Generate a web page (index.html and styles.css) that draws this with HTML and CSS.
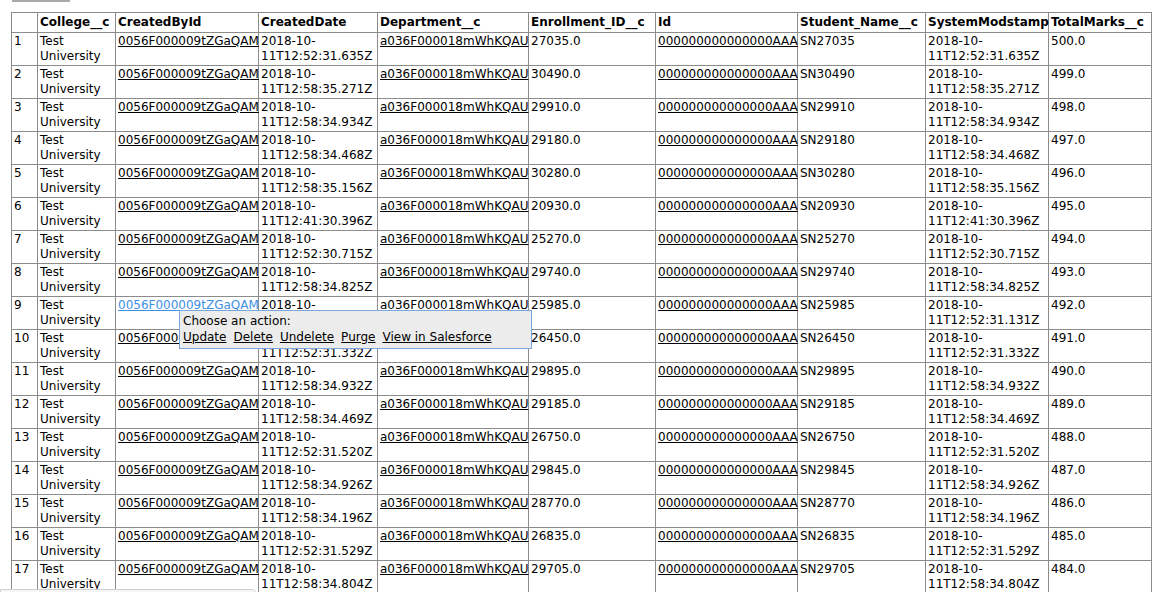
FILE: index.html
```html
<!DOCTYPE html>
<html lang="en">
<head>
  <meta charset="UTF-8" />
  <title>Query Results</title>
  <link rel="stylesheet" href="styles.css">
</head>
<body>
  <div class="page">
    <div class="top-btn"></div>

    <div class="results">
      <table class="grid">
        <colgroup>
          <col class="c-num"><col class="c-college"><col class="c-created"><col class="c-date">
          <col class="c-dept"><col class="c-enroll"><col class="c-id"><col class="c-name">
          <col class="c-mod"><col class="c-marks">
        </colgroup>
        <thead>
          <tr>
            <th></th><th>College__c</th><th>CreatedById</th><th>CreatedDate</th><th>Department__c</th>
            <th>Enrollment_ID__c</th><th>Id</th><th>Student_Name__c</th><th>SystemModstamp</th><th>TotalMarks__c</th>
          </tr>
        </thead>
        <tbody>
          <tr><td>1</td><td>Test University</td><td><a href="#">0056F000009tZGaQAM</a></td><td>2018-10-11T12:52:31.635Z</td><td><a href="#">a036F000018mWhKQAU</a></td><td>27035.0</td><td><a href="#">000000000000000AAA</a></td><td>SN27035</td><td>2018-10-11T12:52:31.635Z</td><td>500.0</td></tr>
          <tr><td>2</td><td>Test University</td><td><a href="#">0056F000009tZGaQAM</a></td><td>2018-10-11T12:58:35.271Z</td><td><a href="#">a036F000018mWhKQAU</a></td><td>30490.0</td><td><a href="#">000000000000000AAA</a></td><td>SN30490</td><td>2018-10-11T12:58:35.271Z</td><td>499.0</td></tr>
          <tr><td>3</td><td>Test University</td><td><a href="#">0056F000009tZGaQAM</a></td><td>2018-10-11T12:58:34.934Z</td><td><a href="#">a036F000018mWhKQAU</a></td><td>29910.0</td><td><a href="#">000000000000000AAA</a></td><td>SN29910</td><td>2018-10-11T12:58:34.934Z</td><td>498.0</td></tr>
          <tr><td>4</td><td>Test University</td><td><a href="#">0056F000009tZGaQAM</a></td><td>2018-10-11T12:58:34.468Z</td><td><a href="#">a036F000018mWhKQAU</a></td><td>29180.0</td><td><a href="#">000000000000000AAA</a></td><td>SN29180</td><td>2018-10-11T12:58:34.468Z</td><td>497.0</td></tr>
          <tr><td>5</td><td>Test University</td><td><a href="#">0056F000009tZGaQAM</a></td><td>2018-10-11T12:58:35.156Z</td><td><a href="#">a036F000018mWhKQAU</a></td><td>30280.0</td><td><a href="#">000000000000000AAA</a></td><td>SN30280</td><td>2018-10-11T12:58:35.156Z</td><td>496.0</td></tr>
          <tr><td>6</td><td>Test University</td><td><a href="#">0056F000009tZGaQAM</a></td><td>2018-10-11T12:41:30.396Z</td><td><a href="#">a036F000018mWhKQAU</a></td><td>20930.0</td><td><a href="#">000000000000000AAA</a></td><td>SN20930</td><td>2018-10-11T12:41:30.396Z</td><td>495.0</td></tr>
          <tr><td>7</td><td>Test University</td><td><a href="#">0056F000009tZGaQAM</a></td><td>2018-10-11T12:52:30.715Z</td><td><a href="#">a036F000018mWhKQAU</a></td><td>25270.0</td><td><a href="#">000000000000000AAA</a></td><td>SN25270</td><td>2018-10-11T12:52:30.715Z</td><td>494.0</td></tr>
          <tr><td>8</td><td>Test University</td><td><a href="#">0056F000009tZGaQAM</a></td><td>2018-10-11T12:58:34.825Z</td><td><a href="#">a036F000018mWhKQAU</a></td><td>29740.0</td><td><a href="#">000000000000000AAA</a></td><td>SN29740</td><td>2018-10-11T12:58:34.825Z</td><td>493.0</td></tr>
          <tr><td>9</td><td>Test University</td><td class="has-menu"><a href="#" class="hover">0056F000009tZGaQAM</a>
              <div class="action-menu">
                <div class="menu-title">Choose an action:</div>
                <div class="menu-links">
                  <a href="#">Update</a><a href="#">Delete</a><a href="#">Undelete</a><a href="#">Purge</a><a href="#">View in Salesforce</a>
                </div>
              </div>
            </td><td>2018-10-11T12:52:31.131Z</td><td><a href="#">a036F000018mWhKQAU</a></td><td>25985.0</td><td><a href="#">000000000000000AAA</a></td><td>SN25985</td><td>2018-10-11T12:52:31.131Z</td><td>492.0</td></tr>
          <tr><td>10</td><td>Test University</td><td><a href="#">0056F000009tZGaQAM</a></td><td>2018-10-11T12:52:31.332Z</td><td><a href="#">a036F000018mWhKQAU</a></td><td>26450.0</td><td><a href="#">000000000000000AAA</a></td><td>SN26450</td><td>2018-10-11T12:52:31.332Z</td><td>491.0</td></tr>
          <tr><td>11</td><td>Test University</td><td><a href="#">0056F000009tZGaQAM</a></td><td>2018-10-11T12:58:34.932Z</td><td><a href="#">a036F000018mWhKQAU</a></td><td>29895.0</td><td><a href="#">000000000000000AAA</a></td><td>SN29895</td><td>2018-10-11T12:58:34.932Z</td><td>490.0</td></tr>
          <tr><td>12</td><td>Test University</td><td><a href="#">0056F000009tZGaQAM</a></td><td>2018-10-11T12:58:34.469Z</td><td><a href="#">a036F000018mWhKQAU</a></td><td>29185.0</td><td><a href="#">000000000000000AAA</a></td><td>SN29185</td><td>2018-10-11T12:58:34.469Z</td><td>489.0</td></tr>
          <tr><td>13</td><td>Test University</td><td><a href="#">0056F000009tZGaQAM</a></td><td>2018-10-11T12:52:31.520Z</td><td><a href="#">a036F000018mWhKQAU</a></td><td>26750.0</td><td><a href="#">000000000000000AAA</a></td><td>SN26750</td><td>2018-10-11T12:52:31.520Z</td><td>488.0</td></tr>
          <tr><td>14</td><td>Test University</td><td><a href="#">0056F000009tZGaQAM</a></td><td>2018-10-11T12:58:34.926Z</td><td><a href="#">a036F000018mWhKQAU</a></td><td>29845.0</td><td><a href="#">000000000000000AAA</a></td><td>SN29845</td><td>2018-10-11T12:58:34.926Z</td><td>487.0</td></tr>
          <tr><td>15</td><td>Test University</td><td><a href="#">0056F000009tZGaQAM</a></td><td>2018-10-11T12:58:34.196Z</td><td><a href="#">a036F000018mWhKQAU</a></td><td>28770.0</td><td><a href="#">000000000000000AAA</a></td><td>SN28770</td><td>2018-10-11T12:58:34.196Z</td><td>486.0</td></tr>
          <tr><td>16</td><td>Test University</td><td><a href="#">0056F000009tZGaQAM</a></td><td>2018-10-11T12:52:31.529Z</td><td><a href="#">a036F000018mWhKQAU</a></td><td>26835.0</td><td><a href="#">000000000000000AAA</a></td><td>SN26835</td><td>2018-10-11T12:52:31.529Z</td><td>485.0</td></tr>
          <tr><td>17</td><td>Test University</td><td><a href="#">0056F000009tZGaQAM</a></td><td>2018-10-11T12:58:34.804Z</td><td><a href="#">a036F000018mWhKQAU</a></td><td>29705.0</td><td><a href="#">000000000000000AAA</a></td><td>SN29705</td><td>2018-10-11T12:58:34.804Z</td><td>484.0</td></tr>
        </tbody>
      </table>
    </div>
  </div>

  <!-- browser link status bubble -->
  <div class="status-bubble"></div>
</body>
</html>
```

FILE: styles.css
```css
*{box-sizing:border-box}
body{
  margin:0;
  font-family:"DejaVu Sans",Verdana,sans-serif;
  font-size:12px;
  color:#000;
  background:#fff;
  overflow:hidden;
}
.page{padding:0 0 0 11px}

/* bottom edge of the button above the results */
.top-btn{
  width:58px;
  height:2px;
  margin-left:1px;
  background:#a9a9a9;
}

.results{margin-top:10px}

.grid{
  border-collapse:collapse;
  table-layout:fixed;
  width:1141px;
}
.grid th,.grid td{
  border:1px solid #8c8c8c;
  padding:1px 2px;
  line-height:15px;
  text-align:left;
  vertical-align:top;
  overflow:visible;
}
.grid th{font-weight:bold;line-height:17px}
.grid a{color:#000;text-decoration:underline}
.grid a.hover{color:#3d8fe4}

.c-num{width:26px}
.c-college{width:78px}
.c-created{width:143px}
.c-date{width:119px}
.c-dept{width:151px}
.c-enroll{width:127px}
.c-id{width:142px}
.c-name{width:128px}
.c-mod{width:123px}
.c-marks{width:103px}

/* action popup shown on hover of a record id */
.has-menu{position:relative}
.action-menu{
  position:absolute;
  left:63px;
  top:13px;
  width:353px;
  padding:3px;
  background:#ececec;
  border:1px solid #7ba6dc;
  z-index:2;
  white-space:nowrap;
}
.menu-title{line-height:15px}
.menu-links{display:flex;gap:7px;line-height:16px}

.status-bubble{
  position:fixed;
  left:0;
  bottom:-20px;
  width:256px;
  height:23px;
  background:#f6f6f6;
  border:1px solid #d0d0d0;
  border-radius:0 4px 0 0;
}
```
